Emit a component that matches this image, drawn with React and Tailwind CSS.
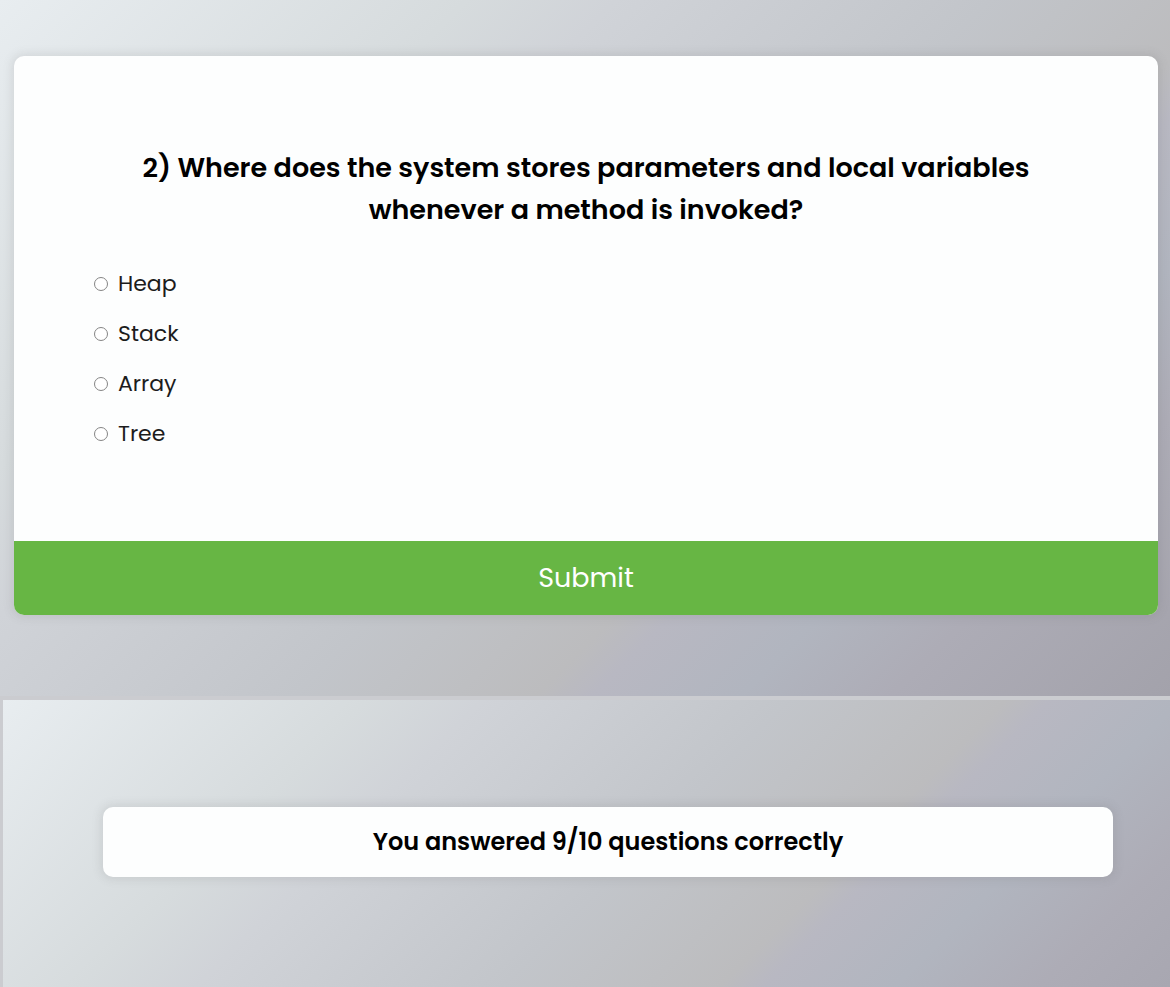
const answers = ["Heap", "Stack", "Array", "Tree"];

export default function App() {
  return (
    <main className="flex min-h-screen flex-col bg-[#cbccd0] font-['Poppins','Inter',sans-serif] text-black">
      <section className="bg-[linear-gradient(135deg,#e8edf0_0%,#d6dbdd_25%,#d0d3d8_33%,#c2c5ca_53%,#bcbcbe_66%,#b8b8c2_69%,#b1b5bf_77%,#adacb6_85%,#a3a2ab_100%)] pt-14 pr-3 pb-[81px] pl-[14px]">
        <form
          className="overflow-hidden rounded-[10px] bg-[#fdfefe] shadow-[0_0_10px_2px_rgba(100,100,100,0.15)]"
          onSubmit={(e) => e.preventDefault()}
        >
          <div className="px-20 pt-[91px] pb-[82px]">
            <h2 className="mx-auto max-w-[920px] text-center text-[27px] leading-[42px] font-semibold">
              2) Where does the system stores parameters and local variables
              whenever a method is invoked?
            </h2>
            <ul className="mt-[28px] text-[22px] leading-[50px] text-[#1c1c1c]">
              {answers.map((answer) => (
                <li key={answer}>
                  <label className="flex items-center gap-[10px]">
                    <input
                      type="radio"
                      name="answer"
                      value={answer}
                      className="size-[14px] appearance-none rounded-full border border-[#858585] bg-white checked:border-4 checked:border-[#65b543]"
                    />
                    {answer}
                  </label>
                </li>
              ))}
            </ul>
          </div>
          <button
            type="submit"
            className="block w-full bg-[#67b644] py-4 text-[27px] leading-[42px] text-white"
          >
            Submit
          </button>
        </form>
      </section>
      <section className="mt-[4px] ml-[3px] grow bg-[linear-gradient(135deg,#e8edf0_0%,#d6dbdd_25%,#d0d3d8_33%,#c2c5ca_54%,#bcbcbe_69%,#b8b8c2_72%,#b1b5bf_81%,#adacb6_91%,#a8a7b1_100%)] pt-[107px] pr-[57px] pb-14 pl-[100px]">
        <div className="rounded-[10px] bg-[#fdfefe] px-4 py-[14px] shadow-[0_0_10px_2px_rgba(100,100,100,0.15)]">
          <h2 className="text-center text-[24px] leading-[42px] font-semibold">
            You answered 9/10 questions correctly
          </h2>
        </div>
      </section>
    </main>
  );
}
